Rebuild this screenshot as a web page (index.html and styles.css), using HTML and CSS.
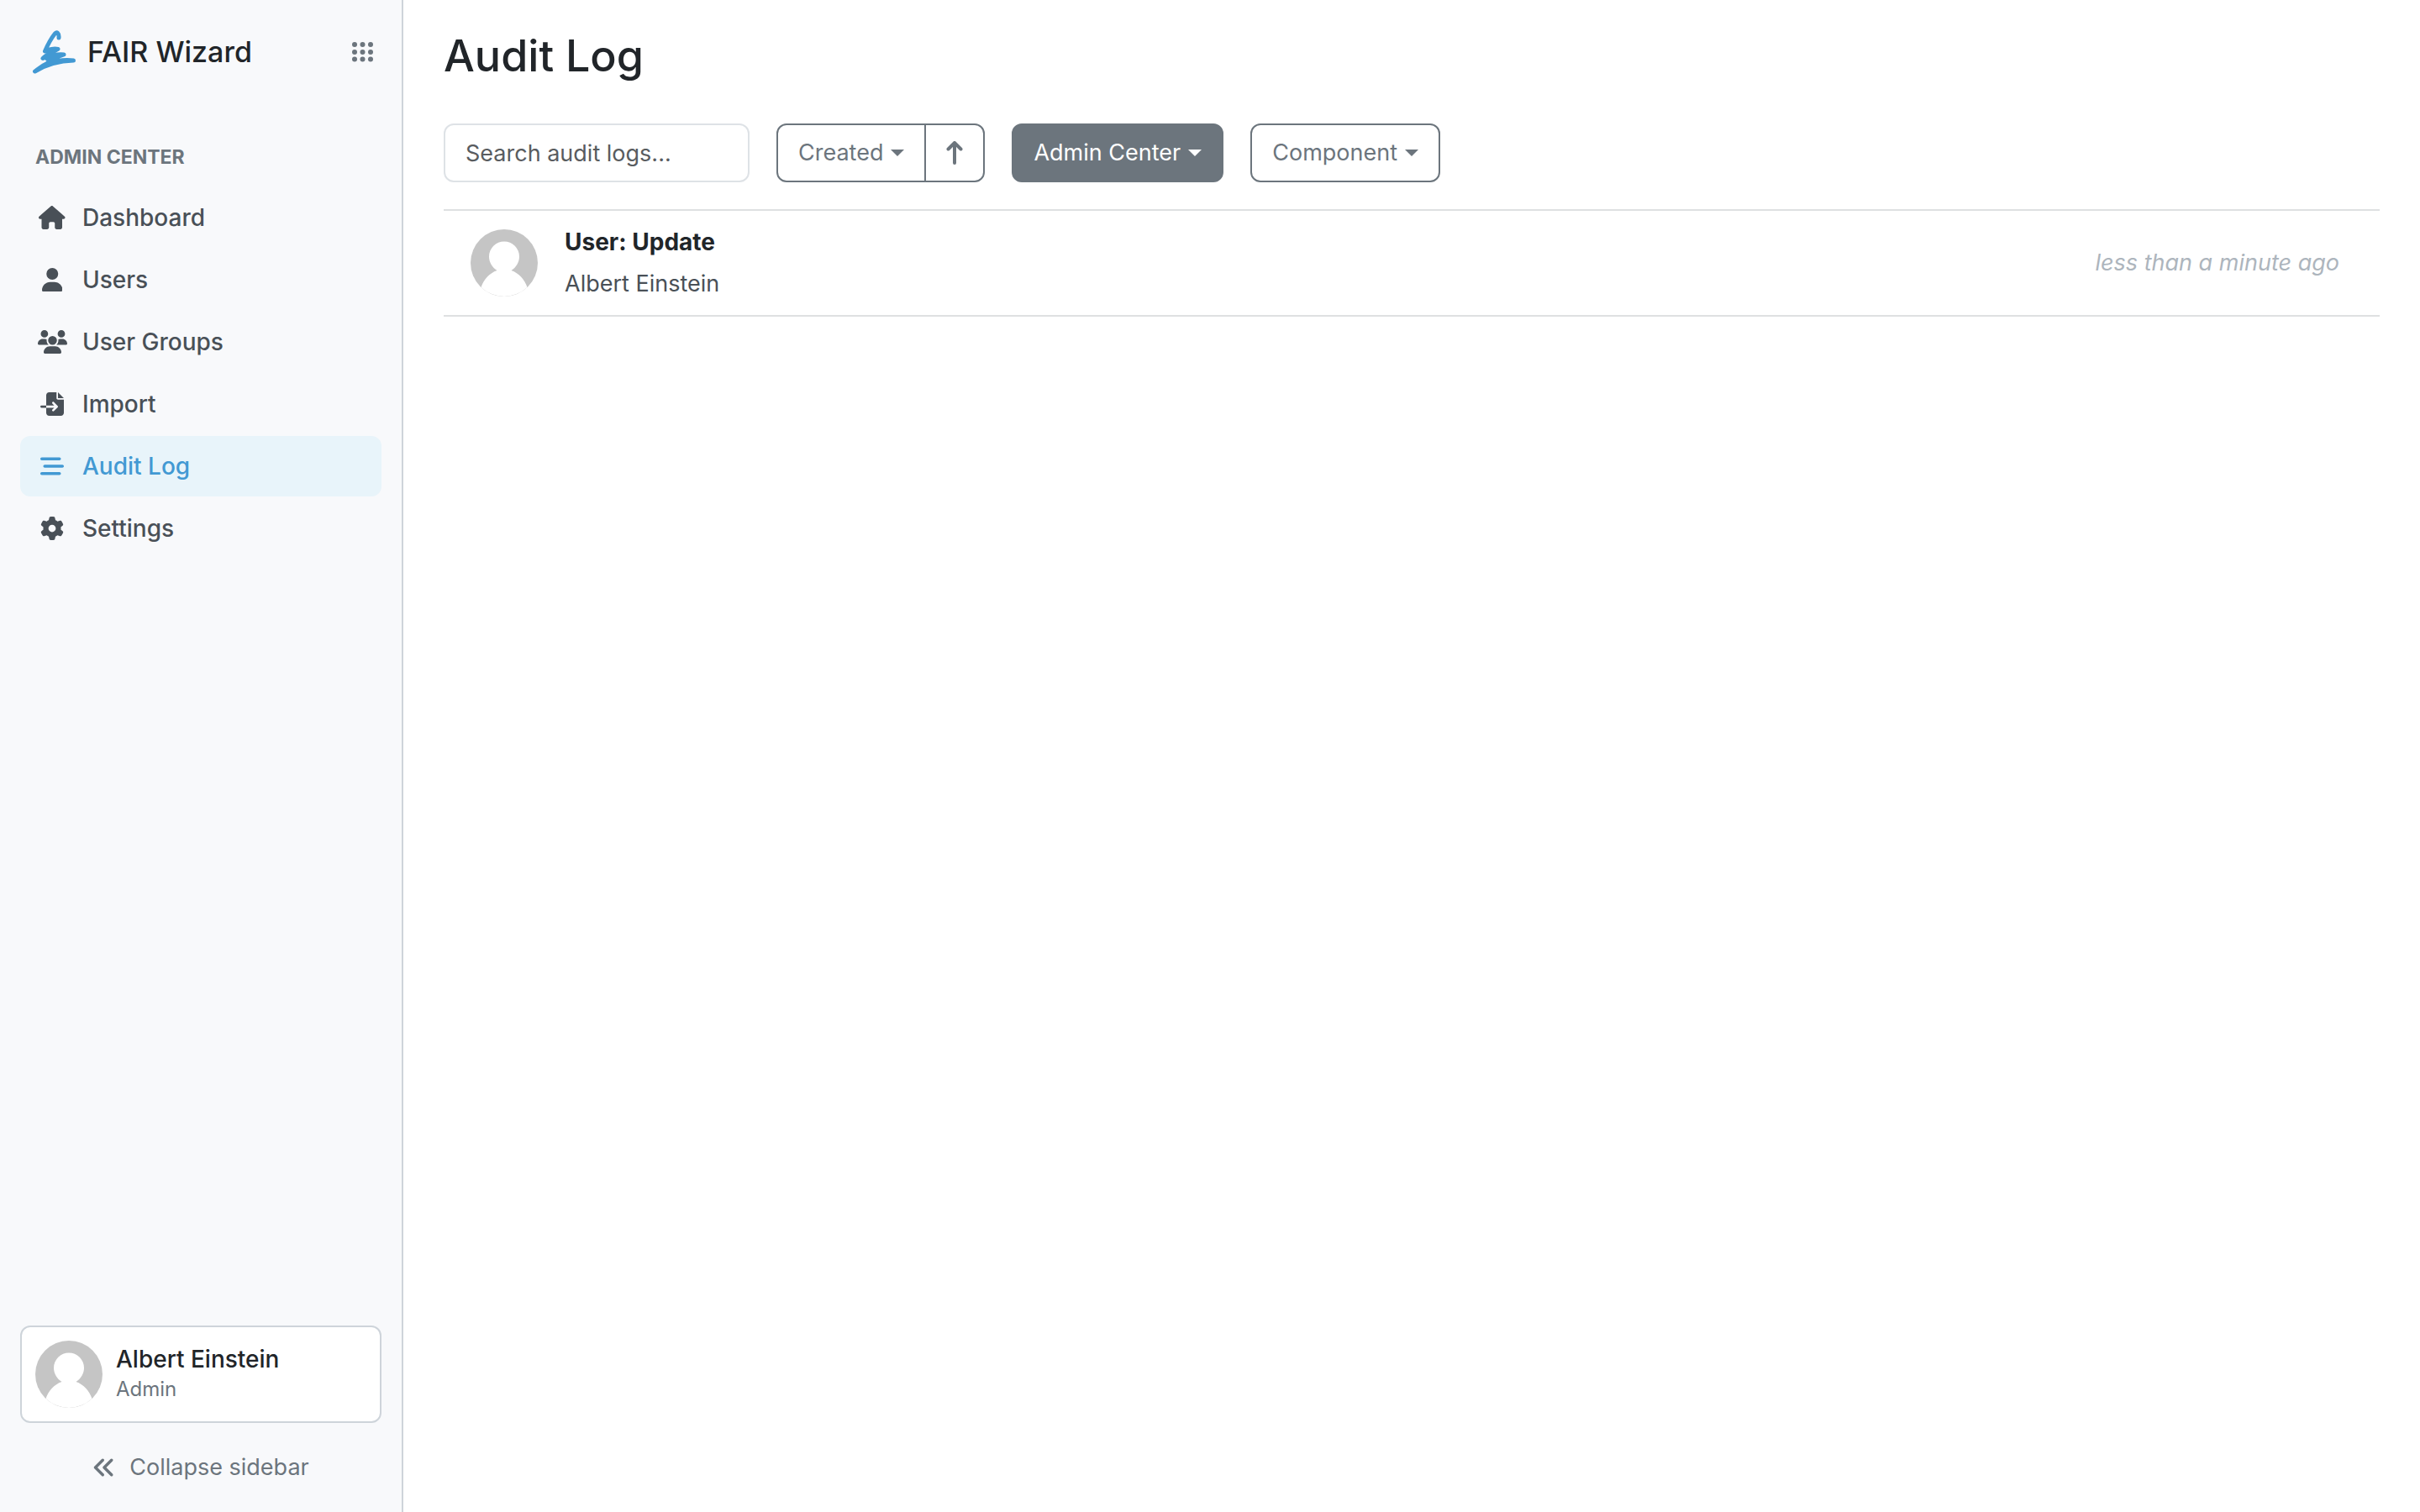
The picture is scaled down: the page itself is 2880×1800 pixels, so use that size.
FILE: index.html
```html
<!DOCTYPE html>
<html lang="en">
<head>
<meta charset="utf-8">
<title>Audit Log – FAIR Wizard</title>
<link rel="stylesheet" href="styles.css">
</head>
<body>
<div class="app">
  <aside class="sidebar">
    <header class="brand">
      <a class="brand-link" href="#">
        <svg class="brand-logo" viewBox="0 0 52 52" aria-hidden="true"><path d="M32 9C32.500 3.500 29.500 1 27 4.500C23 9.500 18.500 18 15.500 25C20 22.500 27 21.500 31 22.500C27 25 18 28.500 13 33.500C20 31 32 28 38 29C32 31 24 34 18 39.500C11 42.500 7 46.500 3.500 49C15 42 30 36.500 49.500 36C38 34.500 26 37 18 39.500C22 35 29 31 35 30L18 34L22 28"/></svg>
        <span>FAIR Wizard</span>
      </a>
      <button class="apps-button" type="button" aria-label="Applications">
        <svg class="apps-icon" viewBox="0 0 26 24" aria-hidden="true"><circle cx="4" cy="3" r="3"/><circle cx="13.500" cy="3" r="3"/><circle cx="23" cy="3" r="3"/><circle cx="4" cy="12" r="3"/><circle cx="13.500" cy="12" r="3"/><circle cx="23" cy="12" r="3"/><circle cx="4" cy="20.500" r="3"/><circle cx="13.500" cy="20.500" r="3"/><circle cx="23" cy="20.500" r="3"/></svg>
      </button>
    </header>
    <h2 class="section-title">ADMIN CENTER</h2>
    <nav class="menu">
      <a class="menu-item" href="#"><svg class="icon" viewBox="0 0 576 512" aria-hidden="true"><path d="M575.8 255.500c0 18-15 32.100-32 32.100l-32 0 .7 160.200c0 2.700-.2 5.400-.5 8.100l0 16.200c0 22.100-17.900 40-40 40l-16 0c-1.100 0-2.200 0-3.300-.1c-1.400 .1-2.800 .1-4.200 .1L416 512l-24 0c-22.100 0-40-17.900-40-40l0-24 0-64c0-17.700-14.300-32-32-32l-64 0c-17.700 0-32 14.300-32 32l0 64 0 24c0 22.100-17.900 40-40 40l-24 0-31.900 0c-1.500 0-3-.1-4.500-.2c-1.200 .1-2.400 .2-3.600 .2l-16 0c-22.100 0-40-17.900-40-40l0-112c0-.9 0-1.900 .1-2.800l0-69.700-32 0c-18 0-32-14-32-32.100c0-9 3-17 10-24L266.400 8c7-7 15-8 22-8s15 2 21 7L564.800 231.500c8 7 12 15 11 24z"/></svg>Dashboard</a>
      <a class="menu-item" href="#"><svg class="icon" viewBox="0 0 448 512" aria-hidden="true"><path d="M224 256A128 128 0 1 0 224 0a128 128 0 1 0 0 256zm-45.700 48C79.800 304 0 383.800 0 482.300C0 498.700 13.300 512 29.700 512l388.600 0c16.400 0 29.700-13.300 29.700-29.700C448 383.800 368.200 304 269.700 304l-91.400 0z"/></svg>Users</a>
      <a class="menu-item" href="#"><svg class="icon" viewBox="0 0 640 512" aria-hidden="true"><path d="M144 0a80 80 0 1 1 0 160A80 80 0 1 1 144 0zM512 0a80 80 0 1 1 0 160A80 80 0 1 1 512 0zM0 298.700C0 239.800 47.800 192 106.700 192l42.700 0c15.900 0 31 3.500 44.600 9.700c-1.300 7.200-1.900 14.700-1.900 22.300c0 38.200 16.800 72.500 43.300 96c-.2 0-.4 0-.7 0L21.300 320C9.600 320 0 310.400 0 298.700zM405.300 320c-.2 0-.4 0-.7 0c26.600-23.500 43.300-57.800 43.300-96c0-7.600-.7-15-1.900-22.300c13.600-6.300 28.700-9.700 44.600-9.700l42.700 0C592.200 192 640 239.800 640 298.700c0 11.800-9.600 21.300-21.300 21.300l-213.300 0zM224 224a96 96 0 1 1 192 0 96 96 0 1 1 -192 0zM128 485.300C128 411.700 187.700 352 261.300 352l117.300 0C452.300 352 512 411.700 512 485.300c0 14.700-11.900 26.700-26.700 26.700l-330.700 0c-14.700 0-26.700-11.900-26.700-26.700z"/></svg>User Groups</a>
      <a class="menu-item" href="#"><svg class="icon" viewBox="0 0 512 512" aria-hidden="true"><path d="M128 64c0-35.300 28.700-64 64-64L352 0l0 128c0 17.700 14.300 32 32 32l128 0 0 288c0 35.300-28.700 64-64 64l-256 0c-35.300 0-64-28.700-64-64l0-112 174.100 0-39 39c-9.400 9.400-9.400 24.600 0 33.900s24.600 9.400 33.900 0l80-80c9.400-9.400 9.400-24.600 0-33.900l-80-80c-9.400-9.400-24.600-9.400-33.900 0s-9.400 24.600 0 33.900l39 39L128 288l0-224zm0 224l0 48L24 336c-13.300 0-24-10.700-24-24s10.700-24 24-24l104 0zM512 128l-128 0L384 0 512 128z"/></svg>Import</a>
      <a class="menu-item menu-item-active" href="#" aria-current="page"><svg class="icon" viewBox="0 0 512 512" aria-hidden="true"><path d="M0 96C0 78.300 14.300 64 32 64l384 0c17.700 0 32 14.300 32 32s-14.300 32-32 32L32 128C14.300 128 0 113.700 0 96zM64 256c0-17.700 14.300-32 32-32l384 0c17.700 0 32 14.300 32 32s-14.300 32-32 32L96 288c-17.700 0-32-14.300-32-32zM448 416c0 17.700-14.300 32-32 32L32 448c-17.700 0-32-14.300-32-32s14.300-32 32-32l384 0c17.700 0 32 14.300 32 32z"/></svg>Audit Log</a>
      <a class="menu-item" href="#"><svg class="icon" viewBox="0 0 512 512" aria-hidden="true"><path d="M495.900 166.600c3.200 8.700 .5 18.400-6.400 24.600l-43.300 39.400c1.100 8.300 1.700 16.800 1.700 25.400s-.6 17.100-1.700 25.400l43.300 39.400c6.900 6.200 9.600 15.900 6.400 24.600c-4.400 11.900-9.700 23.300-15.800 34.300l-4.700 8.100c-6.600 11-14 21.400-22.100 31.200c-5.900 7.200-15.700 9.600-24.500 6.800l-55.700-17.700c-13.400 10.300-28.200 18.900-44 25.400l-12.500 57.100c-2 9.100-9 16.300-18.200 17.800c-13.800 2.300-28 3.500-42.500 3.500s-28.700-1.200-42.500-3.500c-9.200-1.500-16.200-8.700-18.200-17.800l-12.500-57.100c-15.800-6.500-30.600-15.100-44-25.400L83.100 425.900c-8.800 2.800-18.600 .3-24.500-6.800c-8.100-9.800-15.500-20.200-22.100-31.200l-4.700-8.100c-6.100-11-11.400-22.400-15.800-34.300c-3.200-8.700-.5-18.400 6.400-24.600l43.300-39.400C64.600 273.100 64 264.600 64 256s.6-17.100 1.700-25.400L22.400 191.200c-6.900-6.200-9.600-15.900-6.400-24.600c4.400-11.900 9.700-23.300 15.800-34.300l4.700-8.100c6.600-11 14-21.400 22.100-31.200c5.900-7.200 15.700-9.600 24.500-6.800l55.700 17.700c13.400-10.300 28.200-18.900 44-25.400l12.500-57.100c2-9.100 9-16.300 18.200-17.800C227.300 1.200 241.500 0 256 0s28.700 1.200 42.500 3.500c9.200 1.500 16.200 8.700 18.200 17.800l12.500 57.100c15.800 6.500 30.600 15.100 44 25.400l55.700-17.700c8.800-2.800 18.600-.3 24.500 6.800c8.100 9.800 15.500 20.200 22.100 31.200l4.700 8.100c6.100 11 11.400 22.400 15.800 34.300zM256 336a80 80 0 1 0 0-160 80 80 0 1 0 0 160z"/></svg>Settings</a>
    </nav>
    <footer class="sidebar-footer">
      <a class="user-card" href="#">
        <svg class="avatar" viewBox="0 0 80 80" aria-hidden="true"><circle class="avatar-back" cx="40" cy="40" r="40"/><path class="avatar-person" d="M40 14.500a18 18 0 0 1 18 18c0 7-4 13-9.500 16.500c9 3 16 11 19 20A40 40 0 0 1 12.500 69c3-9 10-17 19-20c-5.500-3.500-9.500-9.500-9.500-16.500a18 18 0 0 1 18-18z"/></svg>
        <span class="user-text"><span class="user-name">Albert Einstein</span><span class="user-role">Admin</span></span>
      </a>
      <button class="collapse-button" type="button"><svg class="icon" viewBox="0 0 512 512" aria-hidden="true"><path d="M41.400 233.400c-12.500 12.500-12.500 32.800 0 45.300l160 160c12.500 12.500 32.800 12.500 45.300 0s12.500-32.800 0-45.300L109.300 256 246.600 118.600c12.500-12.500 12.500-32.800 0-45.300s-32.800-12.500-45.300 0l-160 160zm352-160l-160 160c-12.500 12.500-12.500 32.800 0 45.300l160 160c12.500 12.500 32.800 12.500 45.300 0s12.500-32.800 0-45.300L301.300 256 438.600 118.600c12.500-12.500 12.500-32.800 0-45.300s-32.800-12.500-45.300 0z"/></svg>Collapse sidebar</button>
    </footer>
  </aside>
  <main class="content">
    <h1 class="page-title">Audit Log</h1>
    <div class="toolbar">
      <input class="search" type="text" placeholder="Search audit logs..." aria-label="Search audit logs">
      <div class="button-group">
        <button class="button" type="button">Created<span class="caret"></span></button>
        <button class="button button-icon" type="button" aria-label="Ascending order"><svg class="arrow" viewBox="0 0 20 28" aria-hidden="true"><path d="M10 26V2M2.500 9.500L10 2L17.500 9.500"/></svg></button>
      </div>
      <button class="button button-filled" type="button">Admin Center<span class="caret"></span></button>
      <button class="button" type="button">Component<span class="caret"></span></button>
    </div>
    <ul class="log">
      <li class="log-item">
        <svg class="avatar" viewBox="0 0 80 80" aria-hidden="true"><circle class="avatar-back" cx="40" cy="40" r="40"/><path class="avatar-person" d="M40 14.500a18 18 0 0 1 18 18c0 7-4 13-9.500 16.500c9 3 16 11 19 20A40 40 0 0 1 12.500 69c3-9 10-17 19-20c-5.500-3.500-9.500-9.500-9.500-16.500a18 18 0 0 1 18-18z"/></svg>
        <div class="log-text"><strong class="log-event">User: Update</strong><span class="log-user">Albert Einstein</span></div>
        <time class="log-time">less than a minute ago</time>
      </li>
    </ul>
  </main>
</div>
</body>
</html>
```
FILE: styles.css
```css
* { box-sizing: border-box; }

body {
  margin: 0;
  background: #fff;
  color: #212529;
  font-family: Inter, "Liberation Sans", sans-serif;
  font-size: 27px;
  line-height: 42px;
}

button, input { font: inherit; }
button { cursor: pointer; }
a { color: inherit; text-decoration: none; }

.app { display: flex; min-height: 100vh; }

.icon { width: auto; height: 28px; fill: currentColor; }

.sidebar {
  display: flex;
  flex-direction: column;
  flex: none;
  width: 480px;
  padding: 32px 24px 16px;
  border-right: 2px solid #ced4da;
  background: #f8f9fb;
}

.brand {
  display: flex;
  align-items: center;
  justify-content: space-between;
  height: 60px;
  padding: 0 10px 0 14px;
}

.brand-link {
  display: flex;
  align-items: center;
  gap: 14px;
  font-size: 34px;
  font-weight: 500;
}

.brand-logo {
  width: 52px;
  height: 52px;
  fill: none;
  stroke: #4299d3;
  stroke-width: 5;
  stroke-linecap: round;
  stroke-linejoin: round;
}

.apps-button {
  display: flex;
  padding: 0;
  border: 0;
  background: none;
  color: #6c757d;
}

.apps-icon { width: 26px; height: 24px; fill: currentColor; }

.section-title {
  margin: 74px 0 0;
  padding: 0 18px;
  color: #6c757d;
  font-size: 23px;
  font-weight: 700;
  line-height: 42px;
}

.menu { display: grid; gap: 2px; margin-top: 15px; }

.menu-item {
  display: grid;
  grid-template-columns: 36px 1fr;
  align-items: center;
  gap: 18px;
  height: 72px;
  padding: 0 20px;
  border-radius: 12px;
  color: #495057;
  font-size: 28px;
  font-weight: 500;
}

.menu-item .icon { justify-self: center; }

.menu-item-active { background: #e8f4fa; color: #4299d3; }

.sidebar-footer { margin-top: auto; }

.user-card {
  display: flex;
  align-items: center;
  gap: 16px;
  padding: 16px;
  border: 2px solid #ced4da;
  border-radius: 12px;
  background: #fff;
}

.avatar { flex: none; width: 80px; height: 80px; }
.avatar-back { fill: #c5c5c5; }
.avatar-person { fill: #fff; }

.user-text { display: flex; flex-direction: column; line-height: 36px; }
.user-name { font-size: 28px; font-weight: 500; }
.user-role { color: #6c757d; font-size: 24px; }

.collapse-button {
  display: flex;
  align-items: center;
  justify-content: center;
  gap: 16px;
  width: 100%;
  margin-top: 16px;
  padding: 16px 0;
  border: 0;
  background: none;
  color: #6c757d;
}

.content { flex: 1; min-width: 0; padding: 32px 48px; }

.page-title { margin: 0; font-size: 52px; font-weight: 500; line-height: 70px; }

.toolbar { display: flex; flex-wrap: wrap; gap: 32px; margin-top: 45px; }

.search {
  width: 364px;
  height: 70px;
  padding: 0 24px;
  border: 2px solid #dee2e6;
  border-radius: 12px;
  background: #fff;
  color: #212529;
}

.search::placeholder { color: #595c5f; opacity: 1; }

.button-group { display: flex; }

.button {
  display: flex;
  align-items: center;
  gap: 9px;
  height: 70px;
  padding: 0 24px;
  border: 2px solid #6c757d;
  border-radius: 12px;
  background: #fff;
  color: #6c757d;
}

.button-group .button:first-child { border-radius: 12px 0 0 12px; }
.button-group .button:last-child { margin-left: -2px; border-radius: 0 12px 12px 0; }

.button-filled { background: #6c757d; color: #fff; }

.arrow {
  width: 20px;
  height: 28px;
  fill: none;
  stroke: currentColor;
  stroke-width: 4;
  stroke-linecap: round;
  stroke-linejoin: round;
}

.caret {
  border-top: 8px solid currentColor;
  border-right: 8px solid transparent;
  border-left: 8px solid transparent;
}

.log {
  margin: 32px 0 0;
  padding: 0;
  border-top: 2px solid #dee0e1;
  list-style: none;
}

.log-item {
  display: flex;
  align-items: center;
  gap: 32px;
  height: 126px;
  padding: 0 48px 0 32px;
  border-bottom: 2px solid #dee0e1;
}

.log-text { display: flex; flex: 1; flex-direction: column; gap: 8px; }
.log-event { font-size: 28px; font-weight: 700; }
.log-user { color: #495057; }
.log-time { color: #adb5bd; font-style: italic; }
```
